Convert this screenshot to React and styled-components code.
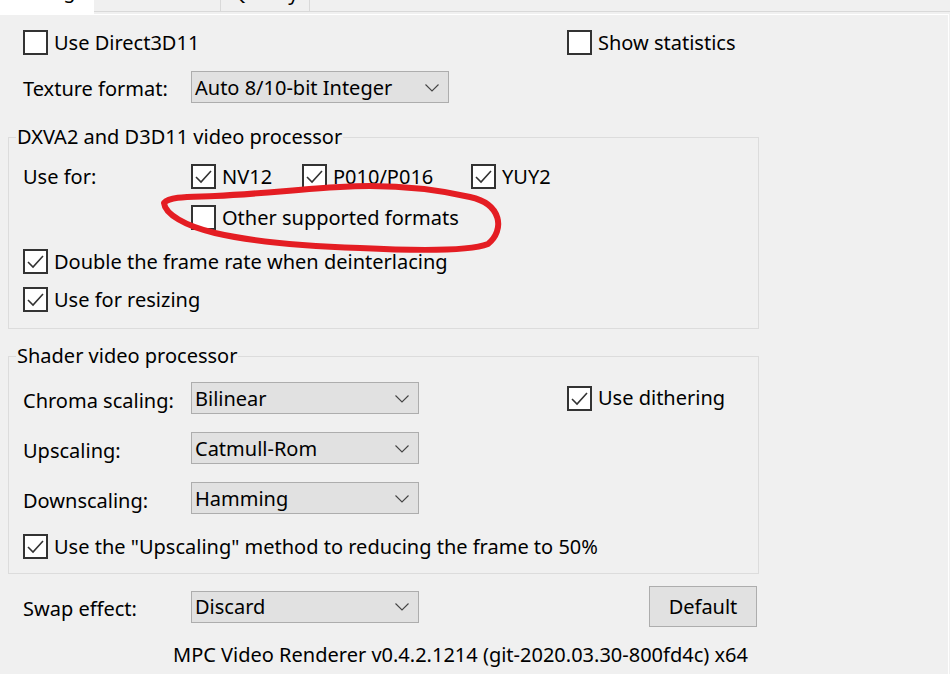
import React from "react";
import styled, { createGlobalStyle } from "styled-components";

const GlobalStyle = createGlobalStyle`
  html, body { margin: 0; padding: 0; background: #f0f0f0; }
  body {
    font-family: "Noto Sans", "Open Sans", sans-serif;
    font-size: 20px;
    color: #000;
  }
  * { box-sizing: border-box; }
`;

const Page = styled.div`
  position: relative;
  width: 950px;
  height: 674px;
  overflow: hidden;
  background: #f0f0f0;
`;

const TabStrip = styled.div`
  display: flex;
  align-items: flex-start;
  height: 14px;
`;

const Tab = styled.div`
  width: ${(p) => p.$w}px;
  height: ${(p) => (p.$active ? 14 : 12)}px;
  background: ${(p) => (p.$active ? "#ffffff" : "#f0f0f0")};
  border-right: ${(p) => (p.$active ? "none" : "1px solid #d9d9d9")};
  border-bottom: ${(p) => (p.$active ? "none" : "1px solid #d9d9d9")};
  overflow: hidden;
  text-align: center;
`;

const TabLabel = styled.span`
  display: block;
  line-height: 20px;
  margin-top: ${(p) => (p.$active ? -19 : -17)}px;
  white-space: nowrap;
`;

const TabFiller = styled.div`
  flex: 1;
  height: 12px;
  border-bottom: 1px solid #d9d9d9;
`;

const Panel = styled.div`
  width: 949px;
  height: 660px;
  border-top: 1px solid #ffffff;
  border-right: 1px solid #ffffff;
  display: flex;
  flex-direction: column;
  padding-left: 23px;
`;

const Row = styled.div`
  display: flex;
  align-items: center;
  height: ${(p) => p.$h || 25}px;
  margin-top: ${(p) => p.$mt || 0}px;
`;

const Cell = styled.div`
  width: ${(p) => p.$w}px;
  flex: none;
  display: flex;
  align-items: center;
`;

const Label = styled.span`
  line-height: 24px;
  white-space: nowrap;
  padding-top: ${(p) => p.$drop || 0}px;
`;

const CheckWrap = styled.label`
  display: flex;
  align-items: center;
  white-space: nowrap;
  line-height: 24px;
`;

const Box = styled.span`
  width: 25px;
  height: 25px;
  flex: none;
  border: 2px solid #333333;
  background: #ffffff;
  display: flex;
  align-items: center;
  justify-content: center;
  margin-right: 6px;
`;

const Check = ({ checked, children }) => (
  <CheckWrap>
    <Box>
      {checked && (
        <svg width="21" height="21" viewBox="0 0 21 21">
          <polyline
            points="3,11 8,16 18,5"
            fill="none"
            stroke="#333"
            strokeWidth="1.6"
          />
        </svg>
      )}
    </Box>
    {children}
  </CheckWrap>
);

const SelectBox = styled.div`
  width: ${(p) => p.$w}px;
  height: 32px;
  background: #e1e1e1;
  border: 1px solid #adadad;
  display: flex;
  align-items: center;
  justify-content: space-between;
  padding: 1px 9px 0 3px;
  line-height: 24px;
  white-space: nowrap;
`;

const Chevron = () => (
  <svg width="14" height="8" viewBox="0 0 14 8">
    <polyline points="0.5,0.5 7,7 13.5,0.5" fill="none" stroke="#444" strokeWidth="1.1" />
  </svg>
);

const Select = ({ w, value }) => (
  <SelectBox $w={w}>
    <span>{value}</span>
    <Chevron />
  </SelectBox>
);

const Group = styled.fieldset`
  margin: ${(p) => p.$mt || 0}px 0 0 -15px;
  width: 751px;
  height: ${(p) => p.$h}px;
  border: 1px solid #dcdcdc;
  padding: 0 0 0 14px;
  min-width: 0;
`;

const Legend = styled.legend`
  margin-left: -7px;
  padding: 0 1px;
  line-height: 26px;
  white-space: nowrap;
`;

const Button = styled.div`
  width: 108px;
  height: 41px;
  background: #e1e1e1;
  border: 1px solid #adadad;
  display: flex;
  align-items: center;
  justify-content: center;
  line-height: 24px;
`;

const Footer = styled.div`
  margin-top: 16px;
  padding-left: 150px;
  line-height: 24px;
  white-space: nowrap;
`;

const Overlay = styled.svg`
  position: absolute;
  left: 0;
  top: 0;
  pointer-events: none;
`;

export default function App() {
  return (
    <Page>
      <GlobalStyle />
      <TabStrip>
        <Tab $w={94} $active>
          <TabLabel $active>Settings</TabLabel>
        </Tab>
        <Tab $w={127}>
          <TabLabel>Information</TabLabel>
        </Tab>
        <Tab $w={89}>
          <TabLabel>Quality</TabLabel>
        </Tab>
        <TabFiller />
      </TabStrip>
      <Panel>
        <Row $mt={15}>
          <Cell $w={544}>
            <Check>Use Direct3D11</Check>
          </Cell>
          <Check>Show statistics</Check>
        </Row>
        <Row $mt={16} $h={32}>
          <Cell $w={168}>
            <Label $drop={4}>Texture format:</Label>
          </Cell>
          <Select w={258} value="Auto 8/10-bit Integer" />
        </Row>

        <Group $mt={21} $h={205}>
          <Legend>DXVA2 and D3D11 video processor</Legend>
          <Row $mt={14}>
            <Cell $w={168}>
              <Label>Use for:</Label>
            </Cell>
            <Cell $w={111}>
              <Check checked>NV12</Check>
            </Cell>
            <Cell $w={169}>
              <Check checked>P010/P016</Check>
            </Cell>
            <Check checked>YUY2</Check>
          </Row>
          <Row $mt={16}>
            <Cell $w={168} />
            <Check>Other supported formats</Check>
          </Row>
          <Row $mt={19}>
            <Check checked>Double the frame rate when deinterlacing</Check>
          </Row>
          <Row $mt={13}>
            <Check checked>Use for resizing</Check>
          </Row>
        </Group>

        <Group $mt={14} $h={231}>
          <Legend>Shader video processor</Legend>
          <Row $mt={13} $h={32}>
            <Cell $w={168}>
              <Label $drop={5}>Chroma scaling:</Label>
            </Cell>
            <Cell $w={376}>
              <Select w={228} value="Bilinear" />
            </Cell>
            <Check checked>Use dithering</Check>
          </Row>
          <Row $mt={18} $h={32}>
            <Cell $w={168}>
              <Label $drop={5}>Upscaling:</Label>
            </Cell>
            <Select w={228} value="Catmull-Rom" />
          </Row>
          <Row $mt={18} $h={32}>
            <Cell $w={168}>
              <Label $drop={5}>Downscaling:</Label>
            </Cell>
            <Select w={228} value="Hamming" />
          </Row>
          <Row $mt={20}>
            <Check checked>Use the "Upscaling" method to reducing the frame to 50%</Check>
          </Row>
        </Group>

        <Row $mt={12} $h={41}>
          <Cell $w={168}>
            <Label $drop={5}>Swap effect:</Label>
          </Cell>
          <Cell $w={458}>
            <Select w={228} value="Discard" />
          </Cell>
          <Button>Default</Button>
        </Row>
        <Footer>MPC Video Renderer v0.4.2.1214 (git-2020.03.30-800fd4c) x64</Footer>
      </Panel>

      <Overlay width="950" height="674" viewBox="0 0 950 674">
        <path
          d="M 164 203 C 170 196, 190 197, 215 196 C 260 194, 300 189, 340 187 C 390 184, 430 188, 470 197 C 502 204, 505 230, 488 244 C 470 251, 420 251, 360 248 C 300 246, 250 241, 215 233 C 185 226, 165 214, 164 203 Z"
          fill="none"
          stroke="#e41d23"
          strokeWidth="6"
          strokeLinecap="round"
          strokeLinejoin="round"
        />
      </Overlay>
    </Page>
  );
}
